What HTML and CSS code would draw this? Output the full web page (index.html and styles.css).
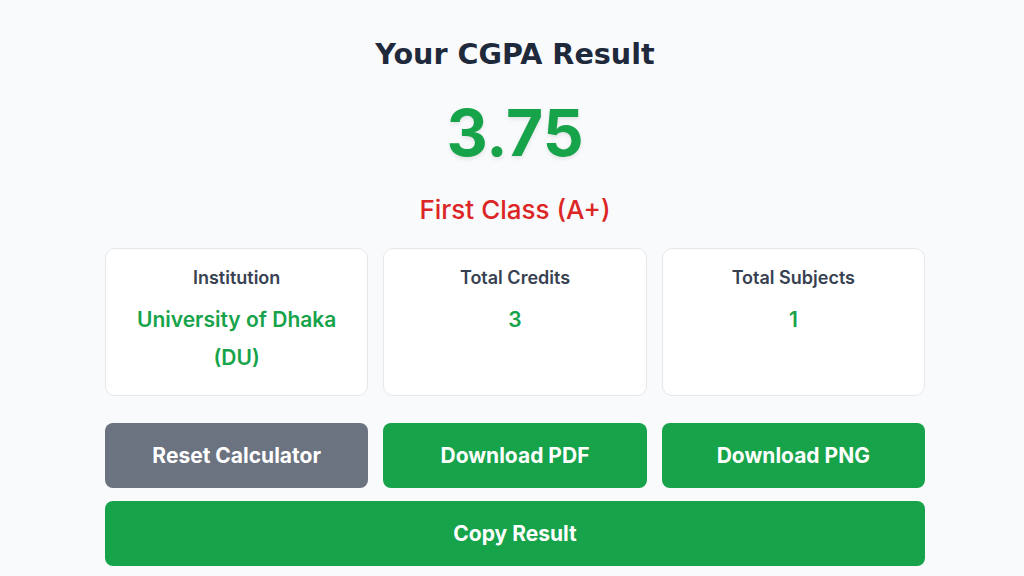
FILE: index.html
```html
<!DOCTYPE html>
<html lang="en">
<head>
<meta charset="utf-8">
<title>Your CGPA Result</title>
<link rel="stylesheet" href="styles.css">
</head>
<body>
<main class="result">
  <h1 class="result-title">Your CGPA Result</h1>
  <div class="result-cgpa">3.75</div>
  <div class="result-class">First Class (A+)</div>
  <section class="stats">
    <div class="stat-card">
      <div class="stat-label">Institution</div>
      <div class="stat-value">University of Dhaka (DU)</div>
    </div>
    <div class="stat-card">
      <div class="stat-label">Total Credits</div>
      <div class="stat-value">3</div>
    </div>
    <div class="stat-card">
      <div class="stat-label">Total Subjects</div>
      <div class="stat-value">1</div>
    </div>
  </section>
  <section class="actions">
    <button class="btn btn-gray">Reset Calculator</button>
    <button class="btn btn-green">Download PDF</button>
    <button class="btn btn-green">Download PNG</button>
    <button class="btn btn-green btn-wide">Copy Result</button>
  </section>
</main>
</body>
</html>
```

FILE: styles.css
```css
html, body {
  margin: 0;
  padding: 0;
  background: #f9fafb;
}
body {
  font-family: Inter, "Noto Sans", sans-serif;
  color: #1f2937;
}
.result {
  width: 820px;
  margin: 0 auto;
  padding-left: 6px;
  padding-top: 36px;
  text-align: center;
}
.result-title {
  margin: 0;
  font-family: "DejaVu Sans", Inter, sans-serif;
  font-size: 28.6px;
  line-height: 36px;
  font-weight: 700;
  color: #1e293b;
}
.result-cgpa {
  margin-top: 26px;
  font-size: 64px;
  line-height: 70px;
  font-weight: 700;
  color: #16a34a;
  text-shadow: 0 2px 4px rgba(0,0,0,0.1);
}
.result-class {
  margin-top: 26px;
  font-size: 26px;
  line-height: 32px;
  font-weight: 500;
  color: #dc2626;
}
.stats {
  margin-top: 22px;
  display: grid;
  grid-template-columns: repeat(3, 1fr);
  gap: 15px;
}
.stat-card {
  background: #fff;
  border: 1px solid #e5e7eb;
  border-radius: 10px;
  height: 148px;
  box-sizing: border-box;
  padding: 17px 20px;
}
.stat-label {
  font-size: 18px;
  line-height: 24px;
  font-weight: 600;
  color: #374151;
}
.stat-value {
  margin-top: 11px;
  font-size: 21px;
  line-height: 38px;
  font-weight: 600;
  color: #16a34a;
}
.actions {
  margin-top: 27px;
  display: grid;
  grid-template-columns: repeat(3, 1fr);
  column-gap: 15px;
  row-gap: 13px;
}
.btn {
  height: 65px;
  border: none;
  border-radius: 8px;
  font-family: Inter, sans-serif;
  font-size: 21px;
  font-weight: 700;
  color: #fff;
  cursor: pointer;
}
.btn-gray { background: #6b7280; }
.btn-green { background: #16a34a; }
.btn-wide { grid-column: 1 / -1; }
```
